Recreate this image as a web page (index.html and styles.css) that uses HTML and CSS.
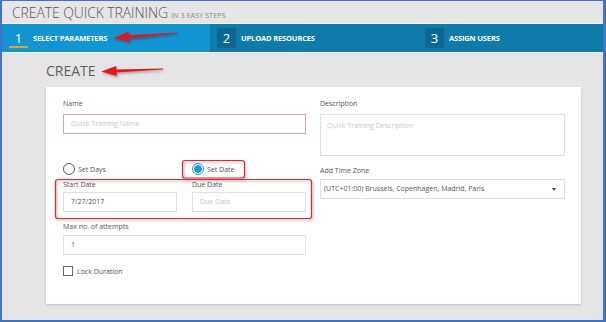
FILE: index.html
```html
<!DOCTYPE html>
<html>
<head>
<meta charset="utf-8">
<link rel="stylesheet" href="styles.css">
</head>
<body>
<div class="frame">
  <header class="titlebar">
    <h1 class="title">CREATE QUICK TRAINING</h1>
    <span class="subtitle">IN 3 EASY STEPS</span>
  </header>
  <nav class="steps">
    <div class="step step-active"><span class="num">1</span><span class="step-label">SELECT PARAMETERS</span></div>
    <div class="step"><span class="num">2</span><span class="step-label">UPLOAD RESOURCES</span></div>
    <div class="step step-last"><span class="num">3</span><span class="step-label">ASSIGN USERS</span></div>
  </nav>
  <main class="main">
    <h2 class="heading">CREATE</h2>
    <section class="card">
      <div class="col col-left">
        <div class="label">Name</div>
        <div class="input input-invalid placeholder">Quick Training Name</div>
        <div class="pair radios">
          <span class="radio-item"><span class="radio"></span>Set Days</span>
          <span class="radio-item"><span class="radio radio-on"></span>Set Date</span>
        </div>
        <div class="pair date-row">
          <div class="field">
            <div class="label label-tight">Start Date</div>
            <div class="input">7/27/2017</div>
          </div>
          <div class="field">
            <div class="label label-tight">Due Date</div>
            <div class="input placeholder">Due Date</div>
          </div>
        </div>
        <div class="label label-tight label-attempts">Max no. of attempts</div>
        <div class="input">1</div>
        <div class="check-row"><span class="checkbox"></span>Lock Duration</div>
      </div>
      <div class="col col-right">
        <div class="label">Description</div>
        <div class="textarea placeholder">Quick Training Description</div>
        <div class="label label-tight label-zone">Add Time Zone</div>
        <div class="select">
          <span>(UTC+01:00) Brussels, Copenhagen, Madrid, Paris</span>
          <span class="caret"></span>
        </div>
      </div>
    </section>
  </main>
  <svg class="annotations" width="606" height="322" viewBox="0 0 606 322">
    <defs>
      <filter id="sh" x="-20%" y="-50%" width="140%" height="200%">
        <feDropShadow dx="1" dy="1.5" stdDeviation="1" flood-color="#000" flood-opacity="0.35"/>
      </filter>
    </defs>
    <g filter="url(#sh)">
      <polygon class="arrow" points="113,38 128.6,31.8 128.9,35.3 177,32.4 177,33.6 129.1,38.4 129.4,41.8"/>
      <polygon class="arrow" points="101,71.5 116.3,65.9 116.4,69.4 163,68.4 163,69.6 116.6,72.5 116.7,76"/>
      <rect class="mark" x="182.5" y="160.5" width="62" height="17.5" rx="2.5"/>
      <rect class="mark" x="55.5" y="179.5" width="256" height="39" rx="2.5"/>
    </g>
  </svg>
</div>
</body>
</html>
```
FILE: styles.css
```css
* { box-sizing: border-box; margin: 0; padding: 0; }
html, body { width: 606px; height: 322px; overflow: hidden; }
body { font-family: "Open Sans", "Noto Sans", sans-serif; color: #555; }

.frame {
  position: relative;
  width: 606px;
  height: 322px;
  border-style: solid;
  border-color: #4472c4;
  border-width: 1px 3px 2px 2px;
  background: #e5e5e5;
  display: flex;
  flex-direction: column;
}

.titlebar {
  height: 22px;
  background: #e6e6e6;
  display: flex;
  align-items: baseline;
  padding: 3px 0 0 10px;
  gap: 3px;
}
.title { font-size: 14px; font-weight: 300; color: #555; line-height: 17px; letter-spacing: -0.1px; }
.subtitle { font-size: 7.3px; color: #888; }

.steps {
  display: flex;
  height: 30px;
  border-top: 1px solid #f3f3f3;
  border-bottom: 1px solid #f3f3f3;
  background: #0e7ba8;
}
.step {
  display: flex;
  align-items: center;
  gap: 5px;
  width: 208px;
  padding-left: 7px;
  color: #fff;
}
.step-active { background: #1196d1; }
.step-last { flex: 1; }
.num {
  flex: none;
  width: 19px;
  height: 20px;
  display: flex;
  align-items: center;
  justify-content: center;
  font-size: 13px;
  font-weight: 400;
  background: #0b6892;
}
.step-active .num { background: transparent; box-shadow: inset 0 -2px 0 #e2a324; }
.step-label { font-size: 7.5px; font-weight: 700; letter-spacing: -0.15px; }

.main { flex: 1; padding: 8px 0 0 44px; }
.heading { font-size: 14px; font-weight: 400; line-height: 20px; color: #5e5e5e; margin-bottom: 6px; }

.card {
  width: 535px;
  height: 217px;
  background: #fff;
  box-shadow: 0 1px 2px rgba(0,0,0,0.18);
  display: flex;
  gap: 14px;
  padding: 12px 16px 0 17px;
}
.col { display: flex; flex-direction: column; }
.col-left { width: 243px; }
.col-right { width: 245px; }

.label { font-size: 7px; line-height: 10px; color: #555; margin-bottom: 5px; }
.label-tight { margin-bottom: 2px; }
.label-attempts { margin-top: 3px; margin-bottom: 3px; }
.label-zone { margin-top: 10px; margin-bottom: 3px; }

.input, .select, .textarea {
  height: 20px;
  border: 1px solid #e0e0e0;
  font-size: 7px;
  line-height: 10px;
  color: #555;
  padding: 0 7px;
  display: flex;
  align-items: center;
}
.input-invalid { border-color: #f39a9a; }
.placeholder { color: #c8c8c8; }
.textarea { height: 42px; align-items: flex-start; padding: 6px 6px; }
.select { padding: 0 3px; justify-content: space-between; }
.caret {
  width: 0; height: 0;
  border-left: 2.5px solid transparent;
  border-right: 2.5px solid transparent;
  border-top: 3px solid #444;
  margin-right: 5px;
}

.pair { display: grid; grid-template-columns: 114px 114px; column-gap: 15px; }
.radios { margin-top: 26px; height: 18px; align-items: center; }
.radio-item { display: flex; align-items: center; gap: 3px; font-size: 7px; color: #555; }
.radio {
  width: 12px; height: 12px;
  border-radius: 50%;
  border: 1px solid #555;
  background: #fff;
}
.radio-on {
  border-color: #1a9ad6;
  background: radial-gradient(circle, #1a9ad6 0 3.6px, #fff 4px);
}
.date-row { margin-top: 1px; padding: 1px 0 7px; }

.check-row { display: flex; align-items: center; gap: 4px; margin-top: 11px; height: 10px; font-size: 7px; color: #555; }
.checkbox { width: 10px; height: 10px; border: 1px solid #666; background: #fff; }

.annotations { position: absolute; left: -2px; top: -1px; pointer-events: none; }
.arrow { fill: #e8141b; }
.mark { fill: none; stroke: #e8262b; stroke-width: 1.2; }
```
